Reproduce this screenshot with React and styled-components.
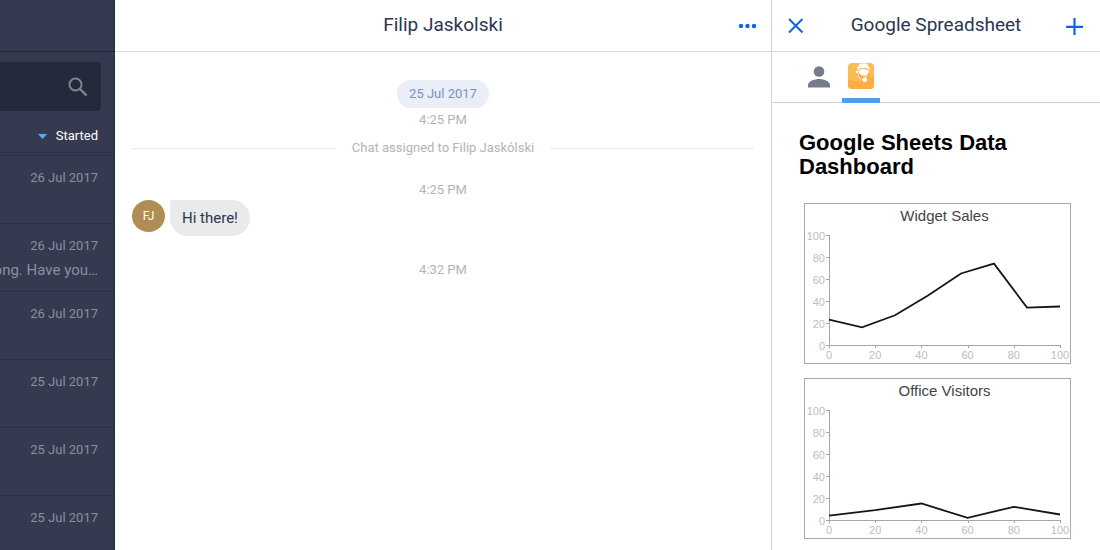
import React from "react";
import styled, { createGlobalStyle } from "styled-components";

const GlobalStyle = createGlobalStyle`
  *, *::before, *::after { box-sizing: border-box; }
  body {
    margin: 0;
    font-family: Roboto, "Liberation Sans", sans-serif;
    font-size: 13px;
    line-height: 16px;
    color: #2b3650;
    background: #fff;
  }
  button, input { font: inherit; }
  h1, h2, h3, p, ul, ol { margin: 0; padding: 0; }
  ul, ol { list-style: none; }
`;

const Page = styled.div`
  display: grid;
  grid-template-columns: 115px minmax(0, 1fr) 329px;
  height: 100vh;
  overflow: hidden;
`;

const Sidebar = styled.aside`
  display: flex;
  flex-direction: column;
  overflow: hidden;
  background: #353a50;
  border-right: 1px solid #1f2b47;
`;

const SidebarTop = styled.div`
  flex: none;
  height: 52px;
  border-bottom: 1px solid #222840;
`;

const SearchBox = styled.form`
  flex: none;
  display: flex;
  align-items: center;
  height: 49px;
  margin: 10px 13px 0 0;
  padding-right: 12px;
  background: #25293c;
  border-radius: 0 4px 4px 0;
`;

const SearchInput = styled.input`
  flex: 1;
  min-width: 0;
  border: 0;
  outline: 0;
  background: transparent;
  color: #fff;
`;

const IconButton = styled.button`
  display: flex;
  padding: 0;
  border: 0;
  background: none;
  color: ${(p) => p.$color || "#0f62ee"};
  cursor: pointer;
`;

const SortButton = styled.button`
  flex: none;
  display: flex;
  align-items: center;
  justify-content: flex-end;
  gap: 9px;
  height: 42px;
  padding: 9px 16px 0 0;
  border: 0;
  border-bottom: 1px solid #2a3047;
  background: none;
  color: #fff;
  cursor: pointer;
`;

const ChatList = styled.ul`
  margin-top: 2px;
`;

const ChatRow = styled.li`
  display: flex;
  flex-direction: column;
  align-items: flex-end;
  gap: 8px;
  height: 68px;
  padding: 14px 16px 0 0;
  border-top: 1px solid #293149;
  color: #8b8f9c;
  white-space: nowrap;
`;

const Preview = styled.p`
  font-size: 15px;
`;

const Chat = styled.main`
  display: flex;
  flex-direction: column;
  min-width: 0;
`;

const Header = styled.header`
  flex: none;
  display: grid;
  grid-template-columns: 24px minmax(0, 1fr) 24px;
  align-items: center;
  height: 52px;
  padding: 0 12px;
  border-bottom: 1px solid #d3dae6;
`;

const Title = styled.h1`
  grid-column: 2;
  padding-bottom: 2px;
  font-size: 19px;
  font-weight: 400;
  line-height: 24px;
  text-align: center;
`;

const Messages = styled.div`
  display: flex;
  flex-direction: column;
  padding: 28px 17px 0;
`;

const DatePill = styled.time`
  align-self: center;
  padding: 6px 12px;
  border-radius: 14px;
  background: #e9eef7;
  color: #7b93bf;
`;

const Time = styled.time`
  align-self: center;
  margin-top: ${(p) => p.$gap}px;
  color: #b1b4bb;
`;

const Notice = styled.p`
  display: flex;
  align-items: center;
  gap: 16px;
  margin-top: 12px;
  color: #b1b4bb;

  &::before, &::after {
    content: "";
    flex: 1;
    height: 1px;
    background: #e6eaeb;
  }
`;

const Message = styled.div`
  display: flex;
  align-items: flex-start;
  gap: 5px;
  margin-top: 2px;
`;

const Avatar = styled.span`
  display: flex;
  align-items: center;
  justify-content: center;
  width: 33px;
  height: 32px;
  border-radius: 50%;
  background: #b18d56;
  color: #fff;
  font-size: 12px;
`;

const Bubble = styled.p`
  padding: 10px 12px;
  border-radius: 2px 18px 18px 18px;
  background: #e8eaec;
  font-size: 15px;
`;

const Panel = styled.aside`
  display: flex;
  flex-direction: column;
  min-width: 0;
  border-left: 1px solid #ccd4e1;
`;

const Tabs = styled.nav`
  flex: none;
  display: flex;
  gap: 4px;
  height: 51px;
  padding-left: 28px;
  border-bottom: 1px solid #ccd4e1;
`;

const Tab = styled.button`
  display: flex;
  justify-content: center;
  width: 38px;
  height: 51px;
  padding: 11px 0 0;
  border: 0;
  border-bottom: 5px solid ${(p) => (p.$active ? "#4f9ff0" : "transparent")};
  background: none;
  cursor: pointer;
`;

const Dashboard = styled.section`
  padding: 28px 27px 0 27px;
  font-family: "Liberation Sans", Arial, sans-serif;
`;

const DashboardTitle = styled.h2`
  color: #000;
  font-size: 22px;
  font-weight: 700;
  line-height: 24px;
`;

const Charts = styled.div`
  display: flex;
  flex-direction: column;
  gap: 14px;
  margin-top: 24px;
  padding: 0 2px 0 5px;
`;

const ChartCard = styled.figure`
  height: 161px;
  margin: 0;
  border: 1px solid #a9a9a9;
`;

const ChartTitle = styled.figcaption`
  margin: 4px 0 -20px 14px;
  color: #444;
  font-size: 15px;
  line-height: 16px;
  text-align: center;
`;

const Plot = styled.svg`
  display: block;
  width: 100%;
  height: 159px;

  text { fill: #bdbdbd; font-size: 11px; }
`;

const TICKS = [0, 20, 40, 60, 80, 100];
const CHARTS = [
  { title: "Widget Sales", values: [23, 16, 27, 45, 65, 74, 34, 35] },
  { title: "Office Visitors", values: [4, 9, 15, 2, 12, 5] },
];
const ROWS = [
  { date: "26 Jul 2017" },
  { date: "26 Jul 2017", preview: "ong. Have you…" },
  { date: "26 Jul 2017" },
  { date: "25 Jul 2017" },
  { date: "25 Jul 2017" },
  { date: "25 Jul 2017" },
];

function LineChart({ title, values }) {
  const x = (v) => 24 + v * 2.31;
  const y = (v) => 141 - v * 1.1;
  const points = values
    .map((v, i) => `${x((i * 100) / (values.length - 1))},${y(v)}`)
    .join(" ");
  return (
    <ChartCard>
      <ChartTitle>{title}</ChartTitle>
      <Plot viewBox="0 0 265 159" aria-label={title}>
        <path d="M24.5 31V144.5M21 141.5H255.5" stroke="#a6a6a6" fill="none" />
        {TICKS.map((t) => (
          <g key={t}>
            <path d={`M21 ${y(t) + 0.5}h3M${Math.round(x(t)) + 0.5} 141v3`} stroke="#a6a6a6" />
            <text x="20" y={y(t) + 5} textAnchor="end">{t}</text>
            <text x={x(t)} y="155" textAnchor="middle">{t}</text>
          </g>
        ))}
        <polyline points={points} fill="none" stroke="#161616" strokeWidth="1.8" />
      </Plot>
    </ChartCard>
  );
}

export default function App() {
  return (
    <>
      <GlobalStyle />
      <Page>
        <Sidebar>
          <SidebarTop />
          <SearchBox role="search" onSubmit={(e) => e.preventDefault()}>
            <SearchInput type="text" aria-label="Search chats" />
            <IconButton aria-label="Search" $color="#80848e">
              <svg width="22" height="22" viewBox="0 0 22 22" fill="none" stroke="currentColor">
                <circle cx="8.5" cy="8.5" r="6" strokeWidth="1.9" />
                <path d="M13 13l6.500 6.500" strokeWidth="2.4" />
              </svg>
            </IconButton>
          </SearchBox>
          <SortButton>
            <svg width="9" height="5" viewBox="0 0 9 5"><path d="M0 0h9L4.500 5z" fill="#55adf5" /></svg>
            Started
          </SortButton>
          <ChatList>
            {ROWS.map((row, i) => (
              <ChatRow key={i}>
                <time>{row.date}</time>
                {row.preview && <Preview>{row.preview}</Preview>}
              </ChatRow>
            ))}
          </ChatList>
        </Sidebar>

        <Chat>
          <Header>
            <Title>Filip Jaskolski</Title>
            <IconButton aria-label="More options">
              <svg width="24" height="24" viewBox="0 0 24 24" fill="currentColor">
                <circle cx="6" cy="12" r="2.2" />
                <circle cx="12.500" cy="12" r="2.2" />
                <circle cx="19" cy="12" r="2.2" />
              </svg>
            </IconButton>
          </Header>
          <Messages>
            <DatePill>25 Jul 2017</DatePill>
            <Time $gap={4}>4:25 PM</Time>
            <Notice>Chat assigned to Filip Jaskólski</Notice>
            <Time $gap={26}>4:25 PM</Time>
            <Message>
              <Avatar>FJ</Avatar>
              <Bubble>Hi there!</Bubble>
            </Message>
            <Time $gap={26}>4:32 PM</Time>
          </Messages>
        </Chat>

        <Panel>
          <Header>
            <IconButton aria-label="Close panel">
              <svg width="24" height="24" viewBox="0 0 24 24" fill="none" stroke="currentColor" strokeWidth="2">
                <path d="M5 5l13.500 13.500M18.500 5L5 18.500" />
              </svg>
            </IconButton>
            <Title as="h2">Google Spreadsheet</Title>
            <IconButton aria-label="Add">
              <svg width="24" height="24" viewBox="0 0 24 24" fill="none" stroke="currentColor" strokeWidth="2.2">
                <path d="M10.500 4v17M2 12.800h17" />
              </svg>
            </IconButton>
          </Header>
          <Tabs>
            <Tab aria-label="Customer details">
              <svg width="24" height="26" viewBox="0 0 24 26" fill="#757c89">
                <circle cx="12" cy="8.5" r="5.3" />
                <path d="M1 24.500v-2.500c0-4 7-6 11-6s11 2 11 6v2.500z" />
              </svg>
            </Tab>
            <Tab $active aria-label="Google Spreadsheet">
              <svg width="26" height="26" viewBox="0 0 26 26">
                <rect width="26" height="26" rx="4" fill="#fdbb58" />
                <path d="M0 16c5 2 9 3 13 2l13-6v10a4 4 0 0 1-4 4H4a4 4 0 0 1-4-4z" fill="#fcae44" />
                <path d="M8.500 9.500l6.500 7.500M21 10l-2.500 5" fill="none" stroke="#ee9433" strokeWidth="1.6" />
                <path d="M9 5l3-4.500h7L21.500 5l-1 5.500-4 2.500-5-2z" fill="#fff" />
                <path d="M10.500 8.500l2-3h6l2 2.500" fill="none" stroke="#f8b45c" strokeWidth="1.1" />
                <circle cx="9" cy="9" r="1.2" fill="#fff" />
                <path d="M9.500 10.500l2 4 3.500 2.500M19.500 11.500l-2 4" fill="none" stroke="#fff" strokeWidth="0.9" />
                <circle cx="16.8" cy="16.8" r="2.3" fill="#fff" />
              </svg>
            </Tab>
          </Tabs>
          <Dashboard>
            <DashboardTitle>Google Sheets Data Dashboard</DashboardTitle>
            <Charts>
              {CHARTS.map((c) => <LineChart key={c.title} {...c} />)}
            </Charts>
          </Dashboard>
        </Panel>
      </Page>
    </>
  );
}
